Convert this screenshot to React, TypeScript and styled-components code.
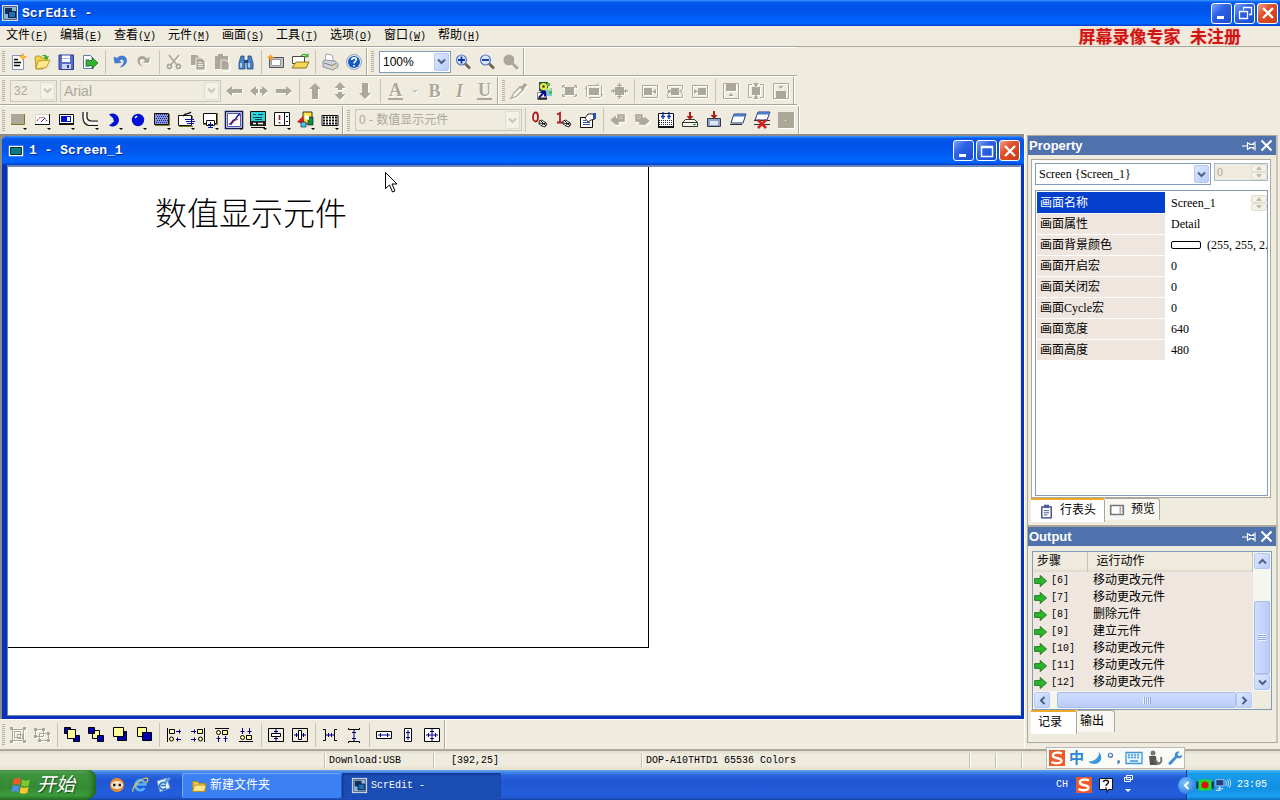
import React from 'react';
import styled, { createGlobalStyle, css } from 'styled-components';

const SANS = "'Liberation Sans', 'Noto Sans CJK SC', sans-serif";
const SERIF = "'Liberation Serif', 'Noto Sans CJK SC', serif";
const MONO = "'Liberation Mono', 'Noto Sans CJK SC', monospace";
const FACE = '#efebde';
const GRAY = '#aca899';
const TITLE_BLUE =
  'linear-gradient(180deg, #3c9bff 0%, #0a5cf0 8%, #0054e8 20%, #0054ea 45%, #0062fc 75%, #0066ff 90%, #0048d8 97%, #003cc0 100%)';

const GlobalStyle = createGlobalStyle`
  * { box-sizing: border-box; }
  html, body { margin: 0; height: 100%; }
  body { background: ${FACE}; font: 12px/16px ${MONO}; color: #000; overflow: hidden; }
  button, input, select { font: inherit; color: inherit; margin: 0; }
  button { padding: 0; border: 0; background: none; }
  svg { display: block; flex: none; }
`;

/* ---------- icons ---------- */

const o = { fill: 'none', stroke: '#000', strokeWidth: 1 };
const g = { fill: GRAY };
const go = { fill: 'none', stroke: GRAY, strokeWidth: 1 };

const arrowH = (x: number, y: number, c = '#000080') => (
  <path d={`M${x} ${y}h5M${x + 1.5} ${y - 2}v4`} stroke={c} fill="none" />
);
const arrowR = (x: number, y: number, c = '#000080') => (
  <path d={`M${x} ${y}h5M${x + 3.5} ${y - 2}v4`} stroke={c} fill="none" />
);
const arrowU = (x: number, y: number, c = '#000080') => (
  <path d={`M${x} ${y}v6M${x - 2} ${y + 2.5}h4`} stroke={c} fill="none" />
);
const arrowD = (x: number, y: number, c = '#000080') => (
  <path d={`M${x} ${y}v6M${x - 2} ${y + 3.5}h4`} stroke={c} fill="none" />
);

const icons: Record<string, React.ReactNode> = {
  newFile: (
    <>
      <path d="M2.500 1.500h11v14h-11z" fill="#fff" stroke="#7b96b8" />
      <path d="M4 5.500h4M4 8.500h7M4 11.500h6" stroke="#000" strokeWidth="1.400" />
      <path d="M13-1l1.300 2.700L17 3l-2.700 1.300L13 7l-1.300-2.700L9 3l2.700-1.300z" fill="#f7931e" />
      <circle cx="13" cy="3" r="1.800" fill="#ffc23a" />
    </>
  ),
  openFile: (
    <>
      <path d="M1 3l1-1h4l1.500 2H13v4L9 15H2z" fill="#f3cf4a" stroke="#b0891d" strokeWidth=".8" />
      <path d="M4 7l12-1-3.500 7.500L2 15z" fill="#ffe98a" stroke="#b0891d" strokeWidth=".8" />
      <path d="M7 3c2-3 5-3 6-.5l2-.5-2 4-3.500-2 1.500-.5C10.500 1.500 9 1.500 7 3z" fill="#3caa28" />
    </>
  ),
  save: (
    <>
      <path d="M1 1h14.500v14.500H1z" fill="#5a6cc8" stroke="#2c3b94" />
      <path d="M4 1.500h8V8H4z" fill="#fff" />
      <path d="M4 10h9v5H4z" fill="#c9d2f0" />
      <path d="M9 11h2v3H9z" fill="#2c3b94" />
      <path d="M4 4.500h8" stroke="#b5c0e8" />
    </>
  ),
  exportFile: (
    <>
      <path d="M1.500 1.500h7l3 3v10h-10z" fill="#fff" stroke="#5c7ea8" />
      <path d="M3 5.500h4M3 12.500h5" stroke="#8fa9c9" />
      <path d="M4 6.500h6V3.500l6 5.500-6 5.500v-3H4z" fill="#32b432" stroke="#14701a" strokeWidth=".8" />
    </>
  ),
  undo: <path d="M2 3l1 6 6-.5-2-2c2-2 5-1.500 5 1 0 2-1.500 4-3.500 5.500 4-1 6-3.500 6-6.500 0-5-6-6-9.500-2z" fill="#3f7fd8" stroke="#2758ac" strokeWidth=".6" />,
  redo: <path d="M14 3l-1 6-6-.5 2-2c-2-2-5-1.500-5 1 0 2 1.500 4 3.500 5.500-4-1-6-3.500-6-6.500 0-5 6-6 9.500-2z" {...g} />,
  cut: (
    <g fill="none" stroke={GRAY} strokeWidth="1.800">
      <path d="M3 1l8 10M13 1L5 11" />
      <circle cx="3.500" cy="12.500" r="2" />
      <circle cx="12.500" cy="12.500" r="2" />
    </g>
  ),
  copy: (
    <>
      <path d="M1 1h6l3 3v7H1z" {...g} />
      <path d="M6 4h6l3 3v9H6z" fill={GRAY} stroke={FACE} />
      <path d="M8 8.500h4M8 10.500h5M8 12.500h5" stroke={FACE} />
    </>
  ),
  paste: (
    <>
      <path d="M1 2h3V0h5v2h5v13H1z" {...g} />
      <path d="M7 6h5l3 3v7H7z" fill={GRAY} stroke={FACE} />
    </>
  ),
  find: (
    <>
      <path d="M3 2h3v3l1 2v8H1V9z" fill="#4a82c8" stroke="#1f4582" strokeWidth=".8" />
      <path d="M13 2h-3v3L9 7v8h6V9z" fill="#4a82c8" stroke="#1f4582" strokeWidth=".8" />
      <path d="M6 6h4v3H6z" fill="#1f4582" />
      <path d="M3 9v4.500M11 9v4.500" stroke="#c6ddf7" strokeWidth="1.600" />
    </>
  ),
  newScreen: (
    <>
      <path d="M1.500 3.500h14v10h-14z" fill="#c8c4b0" stroke="#4a5266" />
      <path d="M3.500 5.500h9v6h-9z" fill="#fff" stroke="#8c98b0" />
      <path d="M2.500 0l1.200 2.300L6 3.500 3.700 4.700 2.500 7 1.300 4.700-1 3.500l2.300-1.200z" fill="#f7931e" />
    </>
  ),
  openScreen: (
    <>
      <path d="M.5 2.500h12v7H.5z" fill="#fff" stroke="#4a4a3a" />
      <path d="M4 8h13l-3 6H0z" fill="#f4d756" stroke="#6d5a14" strokeWidth=".8" />
      <path d="M9 2c2-2 4-2 6-.5M16-.500v3h-3" stroke="#3caa28" fill="none" strokeWidth="1.300" />
    </>
  ),
  print: (
    <>
      <path d="M3 7L4 0l6 1 1.500 6z" fill="#fff" stroke="#8f96a5" strokeWidth=".8" />
      <path d="M1 7l3-1 9 1 3 3v3l-5 3-10-3z" fill="#cfd2d8" stroke="#7e838f" strokeWidth=".8" />
      <path d="M2 9l8 2.500 4-2" stroke="#7e838f" fill="none" />
      <path d="M10 12.500l4-2v1.500l-4 2z" fill="#e8d46a" />
    </>
  ),
  help: (
    <>
      <circle cx="8" cy="8" r="7.500" fill="#e4ecf4" stroke="#8ea4bc" />
      <circle cx="8" cy="8" r="6" fill="#1659c0" />
      <path d="M5.800 6c0-3 4.700-2.800 4.500-.3C10.200 7.300 8 7.400 8 9.500M8 11v1.600" stroke="#fff" strokeWidth="1.700" fill="none" />
    </>
  ),
  zoomIn: (
    <>
      <path d="M10 9.500l5 5" stroke="#75604c" strokeWidth="2.600" />
      <circle cx="6.500" cy="6" r="5" fill="#d6e8ff" stroke="#5a7ac8" strokeWidth="1.200" />
      <path d="M3 6h7M6.500 2.500v7" stroke="#10309c" strokeWidth="1.800" />
    </>
  ),
  zoomOut: (
    <>
      <path d="M10 9.500l5 5" stroke="#75604c" strokeWidth="2.600" />
      <circle cx="6.500" cy="6" r="5" fill="#d6e8ff" stroke="#5a7ac8" strokeWidth="1.200" />
      <path d="M3 6h7" stroke="#10309c" strokeWidth="1.800" />
    </>
  ),
  zoomOff: (
    <>
      <path d="M9 9l6 6" stroke={GRAY} strokeWidth="3" />
      <circle cx="6" cy="6" r="5.500" {...g} />
    </>
  ),
  left: <path d="M0 8l6-5v3h10v4H6v3z" {...g} />,
  right: <path d="M16 8l-6-5v3H0v4h10v3z" {...g} />,
  leftRight: <path d="M-1 8l6-5v3h2v4H5v3zM17 8l-6-5v3H9v4h2v3z" {...g} />,
  up: <path d="M8 0l6 6h-3v10H5V6H2z" {...g} />,
  down: <path d="M8 16l6-6h-3V0H5v10H2z" {...g} />,
  upDown: <path d="M8-1l5.500 6H10v2H6V5H2.500zM8 17l5.500-6H10V9H6v2H2.500z" {...g} />,
  caret: <path d="M5 7h6l-3 3z" fill="#c9c5b6" />,
  dropper: (
    <>
      <path d="M0 15.500l3-5.500 6-6 3 3-6 6z" fill="none" stroke={GRAY} strokeWidth="1.300" />
      <path d="M8 3l3 0 2.500-3 3 2-3 3-1 3z" {...g} />
    </>
  ),
  flower: (
    <>
      <path d="M3-1h9v9H3z" fill="#1a5a4a" />
      <path d="M9 5h7v8H9z" fill="#79c8e8" />
      <circle cx="7.500" cy="3.500" r="3.600" fill="#f4ea3c" />
      <circle cx="7.500" cy="3.500" r="1.300" fill="#333" />
      <path d="M11 0h3v3h-3zM13 8h3v3h-3z" fill="#58b84c" />
      <circle cx="13" cy="6" r="1.500" fill="#f4ea3c" />
      <path d="M1.500 9.500h9v7h-9z" fill="#fff" stroke="#8a8a8a" />
      <path d="M2 15.500h9" stroke="#222" strokeWidth="2" />
      <path d="M3 14.500l5-5M4.500 9H9v4.500" stroke="#0a0a8c" strokeWidth="2" fill="none" />
    </>
  ),
  fitBox: (
    <>
      <path d="M4 4h9v8H4z" {...g} />
      <path d="M1.500 5V2.500H4M13 2.500h2.500V5M15.500 11v2.500H13M4 13.500H1.500V11" {...go} />
      <path d="M2 3l3 3M15 3l-3 3M2 13l3-3M15 13l-3-3" {...go} />
    </>
  ),
  growBox: (
    <>
      <path d="M3 5h10v7H3z" {...g} />
      <path d="M2 2.500h11l-2-2M3 14.500h11M5 16.500l-2-2M.5 3v11M15.500 3v11M-1 6l1.500-2M17 11l-1.500 2" {...go} />
    </>
  ),
  centreBox: (
    <>
      <path d="M4 4h9v8H4z" {...g} />
      <path d="M0 8h17M8.500 0v16" stroke={GRAY} strokeWidth="1.600" />
      <path d="M6 2.500h5M6 13.500h5M2.500 6v4M14.500 6v4" {...go} />
    </>
  ),
  fitLeft: (<><path d="M.5 2.500h15v12H.5z" {...go} /><path d="M2 5h8v7H2zM10 8.500l4-2.500v5z" {...g} /></>),
  fitMid: (<><path d="M.5 2.500h15M.5 14.500h15M.5 2.500V6M15.500 2.500V6M.5 14.500V11M15.500 14.500V11" {...go} /><path d="M4 5h8v7H4zM0 8.500h4v1H0zM12 8.500h4v1h-4zM1 6l4 2.500L1 11zM15 6l-4 2.500 4 2.500z" {...g} /></>),
  fitRight: (<><path d="M.5 2.500h15v12H.5z" {...go} /><path d="M6 5h8v7H6zM6 8.500L2 6v5z" {...g} /></>),
  fitTop: (<><path d="M.5.5h15v15H.5z" {...go} /><path d="M3 0h10v8H3zM8 10l2.500 3h-5z" {...g} /></>),
  fitCentre: (<><path d="M4 1.500H.5v13H4M12 1.500h3.500v13H12" {...go} /><path d="M4 4h8v8H4zM8 5l2.500-5h-5zM8 11l2.500 5h-5z" {...g} /></>),
  fitBottom: (<><path d="M.5.5h15v15H.5z" {...go} /><path d="M3 8h10v8H3zM8 6l2.500-3h-5z" {...g} /></>),
  button: (
    <>
      <path d="M1 2h13v10H1z" {...g} />
      <path d="M14.500 2v10.500H1" stroke="#7d7a28" fill="none" />
    </>
  ),
  meter: (
    <>
      <path d="M1.500 2.500h14v10h-14z" fill="#fff" stroke="#d8d4c4" />
      <path d="M15.500 2v10.500H1" stroke="#111" fill="none" />
      <path d="M3 9c2-5 8-5 10 0" stroke="#b01a1a" fill="none" strokeDasharray="2 1" />
      <path d="M7 10l4-4" stroke="#1530c0" />
    </>
  ),
  lamp: (
    <>
      <path d="M1.500 2.500h14v10h-14z" fill="#fff" stroke="#111" />
      <path d="M3 4h10v6H3z" fill="#0014d0" />
      <path d="M9 5h3v4H9z" fill="#fff" />
      <path d="M1 12h15" stroke="#111" strokeWidth="2" />
    </>
  ),
  pipe: (
    <>
      <path d="M1 0v6c0 4 3 7.500 6 7.500h9M5 0v5c0 2 2 4 4 4h7" fill="none" stroke="#111" strokeWidth="1.200" />
      <path d="M3 0v5.500c0 3.500 2.500 5.700 5.500 5.700H16" fill="none" stroke="#fff" strokeWidth="1.500" />
    </>
  ),
  pie: <path d="M3 2.500A6.500 6.500 0 1 1 3 13.500L8 9.500 7 6z" fill="#0010d8" />,
  circle: (<><circle cx="8" cy="8" r="6.200" fill="#0010d8" /><path d="M5 6l2-2" stroke="#fff" strokeWidth="1.500" /></>),
  pattern: (
    <>
      <path d="M.5 1.500h14v11H.5z" fill="#8c96d0" stroke="#111" />
      {[3, 5, 7, 9, 11].map((y) => <path key={y} d={`M${y % 4 === 3 ? 2 : 3} ${y - 0.5}h11`} stroke="#1824a8" strokeDasharray="1 1" />)}
      <path d="M15.500 2v11.500H1" stroke="#7d7a28" fill="none" />
    </>
  ),
  input: (
    <>
      <path d="M0.500 3.500h13v10H.5z" fill="#fff" stroke="#111" />
      <path d="M5 4c3-4 5-1 8-4" stroke="#111" fill="none" strokeWidth="1.400" />
      <path d="M7 7.500h9M8 9.500h9M9 11.500h7" stroke="#0a18a8" />
      <path d="M14.500 4v3M1 14.500h14" stroke="#7d7a28" />
    </>
  ),
  display: (
    <>
      <path d="M1.500 1.500h13v10h-13z" fill="#fff" stroke="#111" />
      <path d="M15.500 1v11.500H1" stroke="#7d7a28" fill="none" />
      <path d="M4.500 8.500h8v5h-8z" fill="#fff" stroke="#111" />
      <path d="M8.500 10v6M6 12.500h5M6 15.500h5" stroke="#0a18a8" />
    </>
  ),
  trend: (
    <>
      <path d="M-.5-.5h17v17h-17z" fill="#fff" stroke="#101850" strokeWidth="1.500" />
      <path d="M1.500 1.500h13v13h-13z" stroke="#2430a8" fill="none" strokeWidth=".8" />
      <path d="M3 12c3 1 3-4 5-4s2-4 6-6" stroke="#0a18a8" fill="none" strokeWidth="1.400" />
      <path d="M5 13l3-4 4-2" stroke="#b01a1a" fill="none" />
    </>
  ),
  alarm: (
    <>
      <path d="M.5-.5h15v14H.5z" fill="#30d4d8" stroke="#111" />
      <path d="M3 2.500h3M8 2.500h5M3 5.500h9M5 7.500h7" stroke="#064850" />
      <path d="M1 9h15v5H1z" fill="#222" />
      <path d="M3 11.500h3M8 11.500h5" stroke="#fff" strokeWidth="1.500" />
      <path d="M1 15.500h14" stroke="#111" />
    </>
  ),
  notice: (
    <>
      <path d="M.5.5h15v13H.5z" fill="#fff" stroke="#111" />
      <path d="M10.500 1v12M12 4.500h2M12 9.500h2" stroke="#111" />
      <path d="M5.500 3v5M5.500 10v1.500" stroke="#a01818" strokeWidth="1.600" />
    </>
  ),
  palette: (
    <>
      <path d="M5 0h9v12H5z" fill="#ffe23c" stroke="#333" />
      <path d="M10 5h5v8h-5z" fill="#118c44" stroke="#222" strokeWidth=".7" />
      <path d="M-1 10l6-6 2 9z" fill="#d42020" />
      <path d="M3 10h5v5H3z" fill="#49c6e0" stroke="#135" strokeWidth=".7" />
      <path d="M7 3l4 1v4L7 7z" fill="#fff" />
    </>
  ),
  keyboard: (
    <>
      <path d="M0 3.500h16v10H0z" fill="#fff" stroke="#111" />
      {[5.5, 8.5, 11.5].map((y) => <path key={y} d={`M1 ${y}h14`} stroke="#111" strokeWidth="2" strokeDasharray="2 1" />)}
    </>
  ),
  state0: (
    <>
      <ellipse cx="3.500" cy="5" rx="2.500" ry="4.500" fill="none" stroke="#b01a1a" strokeWidth="1.800" />
      <path d="M7 9l3-1 5 4-2 3-3-1-3-2z" fill="#fff" stroke="#333" />
      <path d="M7 11l7 1M9 14l5-4M8 8l6 6" stroke="#222" />
    </>
  ),
  state1: (
    <>
      <path d="M1 2.500l3-1.500v9M1 10.500h6" fill="none" stroke="#b01a1a" strokeWidth="1.800" />
      <path d="M7 9l3-1 5 4-2 3-3-1-3-2z" fill="#fff" stroke="#333" />
      <path d="M7 11l7 1M9 14l5-4M8 8l6 6" stroke="#222" />
    </>
  ),
  properties: (
    <>
      <path d="M.5 5.500h12v10H.5z" fill="#fff" stroke="#111" />
      <path d="M3 8.500h3M3 10.500h7M3 12.500h7" stroke="#345ca8" />
      <path d="M5 6l3-4h4l3 1v4l-4 1-3 2z" fill="#fff" stroke="#222" />
      <path d="M13 1h3v6h-3z" fill="#2850b0" />
    </>
  ),
  prev: <path d="M0 8l6-5v3h1V2h8v8H9v3H6zM9 4.500h4M9 6.500h4" fill={GRAY} stroke={FACE} strokeWidth=".5" />,
  next: <path d="M16 9l-6-5v2H9V2H1v8h4v3h5v1zM3 4.500h4M3 6.500h4" fill={GRAY} stroke={FACE} strokeWidth=".5" />,
  compile: (
    <>
      <path d="M0.500 1.500h15v13H.5z" fill="#fff" stroke="#111" />
      <path d="M1 8.500h14M1 10.500h14M1 12.500h14" stroke="#222" strokeDasharray="1 1" />
      <path d="M0 15h16" stroke="#111" strokeWidth="2" />
      <path d="M5 0v7M11 0v7M3 4.500h4M9 4.500h4" stroke="#0a38a8" strokeWidth="1.400" />
    </>
  ),
  download: (
    <>
      <path d="M0.500 10.500l3-3h9l3 3v4H.5z" fill="#f4f4ea" stroke="#333" />
      <path d="M.5 10.500h15" stroke="#333" />
      <path d="M11 12.500h3" stroke="#2a9a2a" />
      <path d="M8 0v5" stroke="#b01a1a" strokeWidth="2" />
      <path d="M4.500 4h7L8 8z" fill="#b01a1a" />
    </>
  ),
  upload: (
    <>
      <path d="M1.500 6.500h13v8h-13z" fill="#8ea2c4" stroke="#333a4c" />
      <path d="M4 9h8v4H4z" fill="#dfe7f2" />
      <path d="M8-1v5" stroke="#b01a1a" strokeWidth="2" />
      <path d="M4.500 3h7L8 7z" fill="#b01a1a" />
    </>
  ),
  simulate: (
    <>
      <path d="M4 2h12l-3 9H1z" fill="#fff" stroke="#1f3a78" />
      <path d="M4 2h12l-1 2.500H3.500z" fill="#4a7ac8" />
      <path d="M0 12.500h12" stroke="#333" />
    </>
  ),
  simulateOff: (
    <>
      <path d="M4 0h12l-3 8H1z" fill="#fff" stroke="#1f3a78" />
      <path d="M4 0h12l-1 2.500H3.500z" fill="#4a7ac8" />
      <path d="M0 8.500h16M0 12.500h16" stroke="#333" />
      <path d="M4 8l8 8M12 8l-8 8" stroke="#d42020" strokeWidth="2.600" />
    </>
  ),
  block: (<><path d="M0 0h16v16H0z" {...g} /><path d="M7 8h1v1H7z" fill="#fff" /></>),
  group: (
    <>
      <path d="M2.500 2.500h11v11h-11z" {...go} />
      <path d="M4.500 4.500h6v6h-6zM7.500 7.500h5v4h-5z" {...go} />
      <path d="M0 0h3v3H0zM13 0h3v3h-3zM0 13h3v3H0zM13 13h3v3h-3z" {...g} />
    </>
  ),
  ungroup: (
    <>
      <path d="M1.500 2.500h8v7h-8zM5.500 6.500h9v7h-9z" {...go} />
      <path d="M0 1h3v3H0zM8 1h3v3H8zM0 8h3v3H0zM13 5h3v3h-3zM4 12h3v3H4zM13 12h3v3h-3z" {...g} />
    </>
  ),
  toFront: (
    <>
      <path d="M.5.5h6v6h-6zM9.500 8.500h6v6h-6z" fill="#0000b0" stroke="#000" />
      <path d="M3.500 2.500h8v9h-8z" fill="#ffff98" stroke="#000" />
    </>
  ),
  toBack: (
    <>
      <path d="M4.500 3.500h7v8h-7z" fill="#ffff98" stroke="#000" />
      <path d="M.5.5h6v6h-6zM9.500 8.500h6v6h-6z" fill="#0000b0" stroke="#000" />
    </>
  ),
  forward: (
    <>
      <path d="M5.500 4.500h9v9h-9z" fill="#0000b0" stroke="#000" />
      <path d="M1.500.5h10v9h-10z" fill="#ffff98" stroke="#000" />
    </>
  ),
  backward: (
    <>
      <path d="M1.500.5h9v9h-9z" fill="#ffff98" stroke="#000" />
      <path d="M6.500 5.500h9v8h-9z" fill="#0000b0" stroke="#000" />
    </>
  ),
  alignLeft: (<><path d="M1.500 1v14" {...o} /><path d="M3.500 2.500h5v4h-5z" fill="#ffff98" stroke="#000" /><circle cx="5.500" cy="12" r="2" fill="#ffff98" stroke="#000" />{arrowR(10, 4.5)}{arrowH(10, 12.5)}</>),
  alignRight: (<><path d="M14.500 1v14" {...o} /><path d="M7.500 2.500h5v4h-5z" fill="#ffff98" stroke="#000" /><circle cx="10.500" cy="12" r="2" fill="#ffff98" stroke="#000" />{arrowR(1, 4.5)}{arrowR(1, 12.5)}</>),
  alignTop: (<><path d="M1 1.500h14" {...o} /><path d="M8.500 3.500h5v4h-5z" fill="#ffff98" stroke="#000" /><circle cx="4.500" cy="5.500" r="2" fill="#ffff98" stroke="#000" />{arrowU(4.5, 9)}{arrowU(11.5, 9)}</>),
  alignBottom: (<><path d="M1 14.500h14" {...o} /><path d="M8.500 8.500h5v4h-5z" fill="#ffff98" stroke="#000" /><circle cx="4.500" cy="10.500" r="2" fill="#ffff98" stroke="#000" />{arrowD(4.5, 1)}{arrowD(11.5, 1)}</>),
  centreV: (<><path d="M.5 1.500h15v13H.5z" {...o} /><path d="M3.500 6.500h9v3h-9z" fill="#fff" stroke="#000" /><path d="M8 2v4M8 10v4M6 4.500h4M6 11.500h4" stroke="#000080" /></>),
  centreH: (<><path d="M.5 1.500h15v13H.5z" {...o} /><path d="M6.500 3.500h3v9h-3z" fill="#fff" stroke="#000" /><path d="M2 8h4M10 8h4M4.500 6v4M11.500 6v4" stroke="#000080" /></>),
  spaceH: (<><path d="M1 2.500h2.500v11H1M15 2.500h-2.500v11H15" {...o} /><path d="M4 8h8M6.500 6v4M9.500 6v4" stroke="#000080" /></>),
  spaceV: (<><path d="M2.500 1v1.500h11V1M2.500 16v-1.500h11V16" {...o} /><path d="M8 3v11M6 5.500h4M6 11.500h4" stroke="#000080" /></>),
  sameWidth: (<><path d="M.5 4.500h15v7H.5z" fill="#fff" stroke="#000" /><path d="M2 8h12M4.500 6v4M11.500 6v4" stroke="#000080" /></>),
  sameHeight: (<><path d="M4.500 1.500h7v13h-7z" fill="#fff" stroke="#000" /><path d="M8 3v10M6 5.500h4M6 10.500h4" stroke="#000080" /></>),
  sameSize: (<><path d="M.5 1.500h15v13H.5z" fill="#fff" stroke="#000" /><path d="M2 8h12M8 2v12M4.500 6v4M11.500 6v4M6 4.500h4M6 11.500h4" stroke="#000080" /></>),
  app: (
    <>
      <path d="M0 0h16v16H0z" fill="#dfe6ee" />
      <path d="M1.500 1.500h13v13h-13z" fill="#8eb4dc" stroke="#4d5f78" />
      <path d="M3 3h7v6H3z" fill="#10305c" />
      <path d="M6.500 6.500h7v6h-7z" fill="#1c6fb8" stroke="#061c3c" />
    </>
  ),
  doc: (<><path d="M1.500 3.500h13v9h-13z" fill="#0a7c80" stroke="#fff" strokeWidth="1.400" /><path d="M2.500 4.500h11v7h-11z" fill="none" stroke="#03383a" /></>),
  clipboard: (
    <>
      <path d="M2.500 2.500h11v13h-11z" fill="#fff" stroke="#2c3d78" strokeWidth="1.500" />
      <path d="M5 0h6v4H5z" fill="#4a5ea0" />
      <path d="M5 7h6M5 9.500h6M5 12h4" stroke="#2c3d78" />
    </>
  ),
  preview: (<><path d="M1 3h14v10H1z" fill="#fff" stroke="#777" strokeWidth="1.800" /><path d="M11.500 4v8M13 6h1M13 9h1" stroke="#777" /></>),
  folder: (<><path d="M1 3h5l2 2h7v9H1z" fill="#f0c842" stroke="#a57c10" strokeWidth=".8" /><path d="M3 7h13l-2 7H1z" fill="#ffe68c" stroke="#a57c10" strokeWidth=".8" /></>),
  player: (<><circle cx="8" cy="8" r="7" fill="#e88c38" /><ellipse cx="8" cy="8" rx="6" ry="4" fill="#f8e4c8" /><path d="M4 8h2.500M9.500 8H12" stroke="#222" strokeWidth="2.500" /></>),
  ie: (
    <>
      <path d="M12.500 11a5 5 0 1 1 .8-3.500H4" fill="none" stroke="#55b4f8" strokeWidth="2.600" />
      <path d="M1 15C-1 11 9 1 15 1c2 1 0 4-1 5" fill="none" stroke="#f4c83c" strokeWidth="1.200" />
    </>
  ),
  desktop: (
    <>
      <path d="M2 4l10-3 3 10-10 4z" fill="#e8f2fc" stroke="#6a93c0" />
      <path d="M11 7a3.500 3.500 0 1 0 0 4M6 8.500h5" fill="none" stroke="#1c70c8" strokeWidth="1.500" />
      <path d="M9 4l5-4 2 2-5 4z" fill="#5aa0dc" />
    </>
  ),
  sogou: (
    <>
      <path d="M0 0h16v16H0z" fill="#f05a28" />
      <path d="M13 3.500C8 1.500 3 3 4 6s8 1.500 8.500 4.500S6 14 2.500 12" stroke="#fff" strokeWidth="2.400" fill="none" />
    </>
  ),
  moon: <path d="M12 1c2 6-5 11-11 11 3 4 13 4 14-4 0-3-1-5-3-7z" fill="#3c96dc" />,
  punct: (<><circle cx="4" cy="5" r="2.300" fill="none" stroke="#3c78b4" strokeWidth="1.300" /><path d="M12 11h2v2l-2 2" stroke="#3c78b4" fill="#3c78b4" strokeWidth=".8" /></>),
  softKeys: (
    <>
      <path d="M0 2.500h16v11H0z" fill="#eaf4fc" stroke="#3c96dc" strokeWidth="1.300" />
      {[5, 7.5].map((y) => <path key={y} d={`M2 ${y}h12`} stroke="#3c96dc" strokeWidth="1.500" strokeDasharray="2 1" />)}
      <path d="M4 11h8" stroke="#3c96dc" strokeWidth="1.500" />
    </>
  ),
  skin: (<><circle cx="6" cy="3" r="2.500" fill="#777" /><path d="M2 6h7l1 9H3z" fill="#555" /><path d="M10 14c4 0 5-3 4-7M8 10l4 4" stroke="#777" strokeWidth="2" fill="none" /></>),
  wrench: <path d="M1 13l7-7c-1-4 2-6 5-5L10.500 4 13 6l3-2c0 4-3 5-6 4l-6 7c-2 1-4 0-3-2z" fill="#3c8cd2" />,
  helpNote: (
    <>
      <path d="M1.500 1.500h13v11h-4l-1.500 3v-3h-7.500z" fill="#fff" stroke="#111" />
      <path d="M5.500 5c0-2.500 5-2.500 5 0 0 2-2.500 2-2.500 4M8 10.500v1.200" stroke="#111" strokeWidth="1.500" fill="none" />
    </>
  ),
  restoreBar: (
    <>
      <path d="M6.500-1.500h6v4h-6zM4.500.5h6v4h-6z" fill="#2257d8" stroke="#fff" />
      <path d="M5 12h6l-3 3z" fill="#fff" />
    </>
  ),
  recorder: (
    <>
      <path d="M1 2h14v12H1z" fill="#1ee020" />
      <circle cx="8" cy="8" r="4" fill="#e01010" />
      <path d="M-.5 4v8M16.500 4v8" stroke="#102030" strokeWidth="2" />
    </>
  ),
  network: (
    <>
      <path d="M0 2h9v7H0z" fill="#20407c" stroke="#a8c4ec" />
      <path d="M2 12h6M4.500 9v5H0" stroke="#c8d8f0" fill="none" strokeWidth="1.400" />
      <path d="M11 3c1 2 1 4 0 6M13 2c1.500 3 1.500 5 0 8M15 1c2 3 2 7 0 10" stroke="#cfe4ff" fill="none" />
    </>
  ),
  flag: (
    <>
      <path d="M2 3c2-1 4-1 6 0L7 8c-2-1-4-1-6 0z" fill="#f05a28" />
      <path d="M9 3.500c2 1 4 1 6.500 0l-1 5c-2 1-4 1-6.500 0z" fill="#7cc832" />
      <path d="M.8 9c2-1 4-1 6 0l-1 5c-2-1-4-1-6 0z" fill="#4a90e8" />
      <path d="M7.800 9.500c2 1 4 1 6.500 0l-1 5c-2 1-4 1-6.500 0z" fill="#f8c828" />
    </>
  ),
  stepArrow: <path d="M0 5h7V1l8 7-8 7v-4H0z" fill="#2cb42c" stroke="#0c6a14" />,
};

type IconProps = { name: string; size?: number; menu?: boolean };
const Icon = ({ name, size = 20, menu }: IconProps) => (
  <svg width={size} height={size} viewBox="-2 -2 20 20" aria-hidden="true">
    {icons[name]}
    {menu && <path d="M13 16h4l-2 2z" fill="#000" />}
  </svg>
);

/* ---------- shared controls ---------- */

const ToolButton = styled.button<{ $wide?: boolean }>`
  width: ${(p) => (p.$wide ? 25 : 24)}px;
  height: 24px;
  flex: none;
  display: flex;
  align-items: center;
  justify-content: center;
  color: ${GRAY};
  &:disabled svg { filter: drop-shadow(1px 1px 0 #fff); }
`;

const LetterButton = styled(ToolButton)<{ $italic?: boolean; $bar?: boolean }>`
  font: bold 18px/18px ${SERIF};
  font-style: ${(p) => (p.$italic ? 'italic' : 'normal')};
  text-shadow: 1px 1px 0 #fff;
  span { border-bottom: ${(p) => (p.$bar ? `2px solid ${GRAY}` : '0')}; padding: 0 1px; line-height: 16px; }
`;

const NarrowButton = styled(ToolButton)`
  width: 14px;
  overflow: hidden;
`;

const Separator = styled.span`
  width: 1px;
  height: 24px;
  margin: 0 2px 0 3px;
  flex: none;
  background: #c9c5b4;
`;

const Grip = styled.span`
  width: 3px;
  height: 21px;
  margin: 0 1px 0 2px;
  flex: none;
  background: repeating-linear-gradient(180deg, #b4b0a0 0 1px, ${FACE} 1px 2px);
`;

const Band = styled.div`
  display: flex;
  align-items: center;
  border-right: 1px solid ${GRAY};
  box-shadow: 1px 0 0 #fff;
  & + & { margin-left: 2px; }
`;

const ToolRow = styled.div<{ $last?: boolean }>`
  display: flex;
  height: 29px;
  width: max-content;
  min-width: 797px;
  border-bottom: ${(p) => (p.$last ? '0' : `1px solid ${GRAY}`)};
  border-top: 1px solid #fff;
`;

const ComboFrame = styled.span<{ $w: number; $off?: boolean; $gap?: number }>`
  display: grid;
  width: ${(p) => p.$w}px;
  height: 22px;
  margin-left: ${(p) => p.$gap ?? 0}px;
  flex: none;
  border: 1px solid ${(p) => (p.$off ? '#c9c7ba' : '#7f9db9')};
  background: ${(p) => (p.$off ? FACE : '#fff')};
  color: ${(p) => (p.$off ? GRAY : '#000')};
  > * { grid-area: 1 / 1; }
`;

const ComboSelect = styled.select<{ $font: string; $size: number }>`
  appearance: none;
  border: 0;
  outline: 0;
  width: 100%;
  min-width: 0;
  background: transparent;
  padding: 0 18px 0 3px;
  font: ${(p) => p.$size}px/18px ${(p) => p.$font};
  color: inherit;
  opacity: 1;
`;

const ComboArrow = styled.span<{ $off?: boolean }>`
  justify-self: end;
  width: 15px;
  height: 18px;
  margin: 1px;
  display: flex;
  align-items: center;
  justify-content: center;
  pointer-events: none;
  border-radius: 2px;
  color: ${(p) => (p.$off ? '#c9c7ba' : '#4d6185')};
  ${(p) =>
    p.$off
      ? css`background: #f4f2e8; border: 1px solid #e0ddd0;`
      : css`background: linear-gradient(135deg, #dde6fe, #b9cdf8); border: 1px solid #b4c8f4;`}
`;

const Chevron = ({ dir = 'down' }: { dir?: 'down' | 'up' | 'left' | 'right' }) => {
  const turn = { down: 0, left: 90, up: 180, right: 270 }[dir];
  return (
    <svg width="9" height="9" viewBox="0 0 9 9" aria-hidden="true">
      <path d="M1 2.500l3.500 3.500L8 2.500" fill="none" stroke="currentColor" strokeWidth="2" transform={`rotate(${turn} 4.500 4.500)`} />
    </svg>
  );
};

type ComboProps = { label: string; value: string; width: number; off?: boolean; gap?: number; font?: string; size?: number };
const Combo = ({ label, value, width, off, gap, font = SANS, size = 12 }: ComboProps) => (
  <ComboFrame $w={width} $off={off} $gap={gap}>
    <ComboSelect aria-label={label} disabled={off} $font={font} $size={size}>
      <option>{value}</option>
    </ComboSelect>
    <ComboArrow $off={off}><Chevron /></ComboArrow>
  </ComboFrame>
);

type Tool = string | null;
const Tools = ({ items, wide, disabled = [], menu }: { items: Tool[]; wide?: boolean; disabled?: string[]; menu?: boolean }) => (
  <>
    {items.map((name, i) =>
      name === null ? (
        <Separator key={i} />
      ) : (
        <ToolButton key={i} type="button" aria-label={name} $wide={wide} disabled={disabled.includes(name)}>
          <Icon name={name} menu={menu} />
        </ToolButton>
      ),
    )}
  </>
);

/* ---------- window chrome ---------- */

const Screen = styled.div`
  display: flex;
  flex-direction: column;
  min-height: 100vh;
  position: relative;
`;

const TitleBar = styled.header<{ $inner?: boolean }>`
  display: flex;
  align-items: center;
  gap: ${(p) => (p.$inner ? 3 : 2)}px;
  height: ${(p) => (p.$inner ? 29 : 26)}px;
  padding: ${(p) => (p.$inner ? '0 4px 0 4px' : '0 2px 0 0')};
  background: ${TITLE_BLUE};
  border-radius: ${(p) => (p.$inner ? '6px 6px 0 0' : '0')};
  flex: none;
`;

const TitleText = styled.h1`
  flex: 1;
  margin: 0;
  padding-top: 1px;
  font: bold 13px/16px ${MONO};
  color: #fff;
  text-shadow: 1px 1px 0 #0a2a80;
`;

const WindowButtons = styled.div`
  display: flex;
  gap: 2px;
`;

const WindowButton = styled.button<{ $close?: boolean }>`
  width: 21px;
  height: 21px;
  display: flex;
  align-items: center;
  justify-content: center;
  border: 1px solid #fff;
  border-radius: 3px;
  background: ${(p) =>
    p.$close
      ? 'linear-gradient(135deg, #f0a088, #e05028 40%, #c83c14)'
      : 'linear-gradient(135deg, #7ca4f4, #2c62e4 40%, #1c4cd0)'};
`;

const glyphs = {
  minimize: <path d="M3 11h7v3H3z" fill="#fff" />,
  restore: <path d="M6.500 5V2.500h8v7H12M2.500 6.500h8v7h-8zM6 2.500h9M2 6.500h9" fill="none" stroke="#fff" strokeWidth="1.300" />,
  maximize: <path d="M2.500 3.500h11v10h-11zM2 4.500h12" fill="none" stroke="#fff" strokeWidth="1.500" />,
  close: <path d="M3 3l10 10M13 3L3 13" stroke="#fff" strokeWidth="2.300" />,
};
type GlyphName = keyof typeof glyphs;
const ChromeButtons = ({ kinds }: { kinds: GlyphName[] }) => (
  <WindowButtons>
    {kinds.map((k) => (
      <WindowButton key={k} type="button" aria-label={k} $close={k === 'close'}>
        <svg width="16" height="16" viewBox="0 0 16 16">{glyphs[k]}</svg>
      </WindowButton>
    ))}
  </WindowButtons>
);

const MenuBar = styled.nav`
  display: flex;
  height: 21px;
  flex: none;
  border-bottom: 1px solid ${GRAY};
`;

const MenuItem = styled.button`
  width: 54px;
  padding-left: 6px;
  text-align: left;
  font: 12px/20px ${MONO};
  white-space: nowrap;
`;

const Small = styled.span`
  font-size: 10px;
`;

const Watermark = styled.strong`
  position: absolute;
  top: 27px;
  right: 39px;
  font: bold 17px/22px ${SANS};
  color: #d01414;
  text-shadow: 0 0 2px #ffb0a0;
  white-space: pre;
`;

const Workspace = styled.div`
  display: flex;
  flex: 1;
  min-height: 0;
  border-bottom: 2px solid ${GRAY};
`;

const Main = styled.main`
  display: flex;
  flex-direction: column;
  flex: 1;
  min-width: 0;
`;

const MdiArea = styled.section`
  flex: 1;
  display: flex;
  padding: 2px 0 0 2px;
  background: #8c8c88;
`;

const MdiWindow = styled.article`
  flex: 1;
  display: flex;
  flex-direction: column;
  background: #0a32b8;
  padding-bottom: 3px;
  border-radius: 6px 6px 0 0;
  min-width: 0;
`;

const MdiClient = styled.div`
  flex: 1;
  margin: 0 3px 0 5px;
  border: 1px solid #6c88b8;
  border-top-width: 2px;
  border-right-color: #d8ecfc;
  background: #fff;
  position: relative;
`;

const Artboard = styled.div`
  width: 641px;
  height: 481px;
  border-right: 1px solid #000;
  border-bottom: 1px solid #000;
  padding: 20px 0 0 147px;
  font: 300 32px/48px 'Noto Sans CJK SC', sans-serif;
`;

const Pointer = styled.svg`
  position: absolute;
  left: 377px;
  top: 5px;
`;

const BottomTools = styled.div`
  display: flex;
  height: 30px;
  border-top: 1px solid #fff;
`;

/* ---------- docked panels ---------- */

const Dock = styled.aside`
  width: 256px;
  flex: none;
  display: flex;
  flex-direction: column;
  padding: 1px 2px 6px 2px;
  border-left: 1px solid #fff;
`;

const Panel = styled.section<{ $h?: number }>`
  display: flex;
  flex-direction: column;
  flex: ${(p) => (p.$h ? `0 0 ${p.$h}px` : '1')};
  border: 1px solid ${GRAY};
  border-right: 2px solid #c8c4b4;
  padding-bottom: ${(p) => (p.$h ? 8 : 3)}px;
`;

const PanelHead = styled.header`
  display: flex;
  align-items: center;
  gap: 3px;
  height: 19px;
  padding: 0 3px 0 1px;
  background: #5072ac;
  color: #fff;
`;

const PanelTitle = styled.h2`
  flex: 1;
  margin: 0;
  font: bold 13px/18px ${SANS};
`;

const PanelBox = styled.div`
  flex: 1;
  display: flex;
  flex-direction: column;
  margin: 4px 5px 0 3px;
  padding: 3px 2px 1px 3px;
  border: 1px solid ${GRAY};
  background: #fff;
  min-height: 0;
`;

const PropertyTop = styled.div`
  display: flex;
  align-items: flex-start;
  gap: 3px;
  margin-bottom: 5px;
`;

const SpinFrame = styled.span`
  display: flex;
  flex: 1;
  min-width: 0;
  height: 18px;
  border: 1px solid #a8b8c4;
  background: ${FACE};
`;

const SpinInput = styled.input`
  flex: 1;
  width: 0;
  min-width: 0;
  border: 0;
  padding: 0 2px;
  background: transparent;
  color: ${GRAY};
  font: 12px/16px ${SERIF};
`;

const SpinButtons = styled.span`
  display: flex;
  flex-direction: column;
  width: 16px;
  flex: none;
`;

const SpinButton = styled.button`
  flex: 1;
  display: flex;
  align-items: center;
  justify-content: center;
  border: 1px solid #e0ddd0;
  border-radius: 2px;
  background: #f4f2e8;
  color: #c0bdae;
  min-height: 8px;
`;

const Spinners = () => (
  <SpinButtons>
    <SpinButton type="button" disabled aria-label="Up"><svg width="6" height="4" viewBox="0 0 6 4"><path d="M0 4l3-4 3 4z" fill="currentColor" /></svg></SpinButton>
    <SpinButton type="button" disabled aria-label="Down"><svg width="6" height="4" viewBox="0 0 6 4"><path d="M0 0l3 4 3-4z" fill="currentColor" /></svg></SpinButton>
  </SpinButtons>
);

const PropertyList = styled.div`
  flex: 1;
  border: 1px solid #7f9db9;
  padding: 1px 0 0 1px;
  overflow: hidden;
`;

const PropertyTable = styled.table`
  border-collapse: collapse;
  table-layout: fixed;
  width: 100%;
  font: 12px/16px ${SERIF};
`;

const PropertyName = styled.th<{ $active?: boolean }>`
  width: 128px;
  height: 21px;
  padding: 1px 0 0 3px;
  text-align: left;
  font-weight: normal;
  border-bottom: 1px solid #fff;
  background: ${(p) => (p.$active ? '#0440cc' : '#efe7df')};
  color: ${(p) => (p.$active ? '#fff' : '#000')};
`;

const PropertyValue = styled.td`
  padding: 0 0 0 6px;
  white-space: nowrap;
  overflow: hidden;
`;

const ValueLine = styled.span`
  display: flex;
  align-items: center;
  gap: 6px;
  > :first-child { flex: none; }
  > ${SpinButtons} { margin-left: auto; }
`;

const Swatch = styled.span`
  width: 30px;
  height: 8px;
  border: 1px solid #000;
  border-radius: 2px;
  background: #fff;
`;

const Tabs = styled.div`
  display: flex;
  align-items: flex-start;
  margin-left: 3px;
`;

const Tab = styled.button<{ $active?: boolean; $w: number }>`
  display: flex;
  align-items: center;
  gap: 5px;
  width: ${(p) => p.$w}px;
  height: ${(p) => (p.$active ? 24 : 22)}px;
  padding: 0 3px 0 ${(p) => (p.$active ? 7 : 3)}px;
  border: solid ${GRAY};
  border-width: 0 1px 0 0;
  border-top: ${(p) => (p.$active ? '2px solid #f0a828' : `1px solid ${GRAY}`)};
  border-radius: 0 3px 0 0;
  background: ${(p) => (p.$active ? '#fff' : '#f8f6f0')};
  font: 12px/16px ${MONO};
  white-space: nowrap;
`;

const OutputBox = styled.div`
  flex: 1;
  display: grid;
  grid-template-columns: 1fr 18px;
  grid-template-rows: 1fr 18px;
  margin: 5px 4px 0 4px;
  border: 1px solid #7f9db9;
  min-height: 0;
`;

const OutputTable = styled.table`
  border-collapse: collapse;
  table-layout: fixed;
  width: 100%;
  background: #efe7df;
`;

const OutputHead = styled.th`
  height: 20px;
  padding: 0 0 0 4px;
  text-align: left;
  font-weight: normal;
  background: linear-gradient(180deg, ${FACE} 80%, #dedaca);
  &:first-child { width: 54px; border-right: 1px solid #c8c4b4; }
  & + & { padding-left: 9px; border-right: 1px solid #c8c4b4; }
`;

const OutputCell = styled.td`
  height: 17px;
  padding: 0 0 0 6px;
  line-height: 16px;
  white-space: nowrap;
  &:first-child { padding-left: 0; }
`;

const StepLine = styled.span`
  display: flex;
  align-items: center;
  gap: 2px;
  font-size: 10px;
`;

const ScrollTrack = styled.div<{ $across?: boolean }>`
  display: flex;
  flex-direction: ${(p) => (p.$across ? 'row' : 'column')};
  background: #f6f5f0;
  padding: 1px;
`;

const ScrollButton = styled.button`
  width: 16px;
  height: 16px;
  flex: none;
  display: flex;
  align-items: center;
  justify-content: center;
  border: 1px solid #b4c8f4;
  border-radius: 2px;
  background: linear-gradient(135deg, #dde6fe, #bccffa);
  color: #4d6185;
`;

const ScrollGap = styled.span<{ $size: number }>`
  flex: 0 0 ${(p) => p.$size}px;
`;

const ScrollThumb = styled.span<{ $across?: boolean }>`
  flex: 1;
  display: flex;
  align-items: center;
  justify-content: center;
  border: 1px solid #a8bce8;
  border-radius: 2px;
  background: linear-gradient(${(p) => (p.$across ? 180 : 90)}deg, #cfdcfe, #b9ccf8);
  &::after {
    content: '';
    width: 8px;
    height: 7px;
    background: repeating-linear-gradient(${(p) => (p.$across ? 90 : 180)}deg, #eef3ff 0 1px, #8fa8dc 1px 2px);
  }
`;

const PanelButtons = () => (
  <>
    <button type="button" aria-label="Pin">
      <svg width="16" height="14" viewBox="0 0 16 14"><path d="M1 7h5M6.500 3v8M8 5.500h5M8 8.500h5M14 2.500v9M7 4l3 1.500M7 10l3-1.500M13 4l-2 1.500M13 10l-2-1.500" fill="none" stroke="#fff" strokeWidth="1.200" /></svg>
    </button>
    <button type="button" aria-label="Close">
      <svg width="13" height="13" viewBox="0 0 13 13"><path d="M1.500 1.500l10 10M11.500 1.500l-10 10" stroke="#fff" strokeWidth="2" /></svg>
    </button>
  </>
);

/* ---------- status bar and taskbar ---------- */

const StatusBar = styled.footer`
  display: grid;
  grid-template-columns: 324px 109px 208px 1fr 26px 26px 259px;
  height: 19px;
  flex: none;
  background: linear-gradient(180deg, #e0dccc, ${FACE} 20%, ${FACE} 75%, #e4e0c8);
  font: 10px/18px ${MONO};
`;

const StatusCell = styled.span<{ $pad?: number }>`
  margin: 2px 0;
  line-height: 16px;
  padding-left: ${(p) => p.$pad ?? 4}px;
  white-space: nowrap;
  & + & { border-left: 1px solid #c4c0b0; box-shadow: inset 1px 0 0 #fff; }
`;

const TaskBar = styled.footer`
  display: flex;
  height: 30px;
  flex: none;
  color: #fff;
  background: linear-gradient(180deg, #6ea4f0 0%, #3f86ea 8%, #2b66dc 18%, #2156d4 35%, #245edc 80%, #2158d0 92%, #1a44a8 100%);
`;

const StartButton = styled.button`
  display: flex;
  align-items: center;
  gap: 4px;
  width: 96px;
  padding-left: 9px;
  border-radius: 0 8px 10px 0;
  background: linear-gradient(180deg, #6cb46c 0%, #3c943c 15%, #348a34 60%, #3c9c3c 85%, #2c702c 100%);
  box-shadow: inset -3px 0 4px #1f661f;
  font: italic 19px/26px ${SANS};
  color: #fff;
  text-shadow: 1px 1px 1px #1c4a1c;
`;

const QuickLaunch = styled.div`
  display: flex;
  align-items: center;
  gap: 3px;
  width: 86px;
  padding-left: 11px;
`;

const PlainButton = styled.button`
  flex: none;
  color: inherit;
`;

const TaskButton = styled.button<{ $active?: boolean }>`
  display: flex;
  align-items: center;
  gap: 2px;
  width: 159px;
  margin: 3px 1px 2px 0;
  padding-left: 8px;
  border-radius: 2px;
  background: ${(p) => (p.$active ? '#1b4cb4' : '#3c81f3')};
  box-shadow: ${(p) => (p.$active ? 'inset 1px 1px 2px #10307c' : 'inset 1px 1px 1px #74a8fa')};
  color: #fff;
`;

const TrayLead = styled.div`
  display: flex;
  align-items: center;
  gap: 2px;
  margin-left: auto;
  padding-right: 48px;
  font: 10px/16px ${MONO};
`;

const Language = styled.span`
  margin-right: 4px;
`;

const Tray = styled.div`
  display: flex;
  align-items: center;
  width: 94px;
  border-left: 1px solid #0a3c98;
  background: linear-gradient(180deg, #50b8f8 0%, #189ce8 12%, #1290e4 60%, #18a0f0 88%, #0e70c0 100%);
  font: 10px/16px ${MONO};
  padding-right: 13px;
`;

const TrayToggle = styled.button`
  width: 17px;
  height: 17px;
  margin: 0 1px 0 -9px;
  border-radius: 9px;
  display: flex;
  align-items: center;
  justify-content: center;
  flex: none;
  background: radial-gradient(circle at 40% 35%, #7cc4fc, #1c6cd8);
  color: #fff;
`;

const Clock = styled.time`
  margin-left: auto;
`;

const InputBar = styled.div`
  position: absolute;
  right: 95px;
  bottom: 31px;
  display: flex;
  align-items: center;
  gap: 1px;
  height: 22px;
  width: 139px;
  border: 1px solid #b8b8b8;
  background: #fbfbf8;
  color: #2c86d0;
  font: bold 15px/20px ${SANS};
`;

const InputMode = styled.span`
  width: 17px;
  text-align: center;
`;

/* ---------- data ---------- */

const menus: [string, string][] = [
  ['文件', 'F'], ['编辑', 'E'], ['查看', 'V'], ['元件', 'M'], ['画面', 'S'],
  ['工具', 'T'], ['选项', 'O'], ['窗口', 'W'], ['帮助', 'H'],
];

const properties: [string, React.ReactNode][] = [
  ['画面名称', <ValueLine key="n"><span>Screen_1</span><Spinners /></ValueLine>],
  ['画面属性', 'Detail'],
  ['画面背景颜色', <ValueLine key="c"><Swatch /><span>(255, 255, 2.</span></ValueLine>],
  ['画面开启宏', '0'],
  ['画面关闭宏', '0'],
  ['画面Cycle宏', '0'],
  ['画面宽度', '640'],
  ['画面高度', '480'],
];

const steps: [number, string][] = [
  [6, '移动更改元件'], [7, '移动更改元件'], [8, '删除元件'], [9, '建立元件'],
  [10, '移动更改元件'], [11, '移动更改元件'], [12, '移动更改元件'],
];

const elementTools = ['button', 'meter', 'lamp', 'pipe', 'pie', 'circle', 'pattern', 'input', 'display', 'trend', 'alarm', 'notice', 'palette', 'keyboard'];
const arrangeTools = ['group', 'ungroup', null, 'toFront', 'toBack', 'forward', 'backward', null, 'alignLeft', 'alignRight', 'alignTop', 'alignBottom', null, 'centreV', 'centreH', null, 'spaceH', 'spaceV', null, 'sameWidth', 'sameHeight', 'sameSize'];
const offTools = ['redo', 'cut', 'copy', 'paste', 'zoomOff', 'left', 'right', 'leftRight', 'up', 'down', 'upDown', 'dropper', 'fitBox', 'growBox', 'centreBox', 'fitLeft', 'fitMid', 'fitRight', 'fitTop', 'fitCentre', 'fitBottom', 'prev', 'next', 'block', 'group', 'ungroup'];

export default function App() {
  return (
    <Screen>
      <GlobalStyle />
      <TitleBar>
        <Icon name="app" />
        <TitleText>ScrEdit -</TitleText>
        <ChromeButtons kinds={['minimize', 'restore', 'close']} />
      </TitleBar>

      <MenuBar>
        {menus.map(([label, key]) => (
          <MenuItem key={key} type="button">{label}<Small>(<u>{key}</u>)</Small></MenuItem>
        ))}
      </MenuBar>
      <Watermark>屏幕录像专家  未注册</Watermark>

      <ToolRow>
        <Band>
          <Grip />
          <Tools disabled={offTools} items={['newFile', 'openFile', 'save', 'exportFile', null, 'undo', 'redo', null, 'cut', 'copy', 'paste', 'find', null, 'newScreen', 'openScreen', null, 'print', 'help']} />
        </Band>
        <Band>
          <Grip />
          <Combo label="Zoom" value="100%" width={72} gap={4} />
          <Tools disabled={offTools} items={['zoomIn', 'zoomOut', 'zoomOff']} />
        </Band>
      </ToolRow>

      <ToolRow>
        <Band>
          <Grip />
          <Combo label="Font size" value="32" width={47} gap={4} off />
          <Combo label="Font" value="Arial" width={161} gap={3} size={14} off />
          <Tools wide disabled={offTools} items={['left', 'leftRight', 'right', null, 'up', 'upDown', 'down', null]} />
          <LetterButton type="button" disabled $wide $bar><span>A</span></LetterButton>
          <NarrowButton type="button" disabled aria-label="Text colour"><Icon name="caret" /></NarrowButton>
          <LetterButton type="button" disabled $wide>B</LetterButton>
          <LetterButton type="button" disabled $wide $italic>I</LetterButton>
          <LetterButton type="button" disabled $wide $bar><span>U</span></LetterButton>
        </Band>
        <Band>
          <Grip />
          <Tools wide disabled={offTools} items={['dropper', 'flower', 'fitBox', 'growBox', 'centreBox', null, 'fitLeft', 'fitMid', 'fitRight', null, 'fitTop', 'fitCentre', 'fitBottom']} />
        </Band>
      </ToolRow>

      <ToolRow $last>
        <Band>
          <Grip />
          <Tools menu items={elementTools} />
        </Band>
        <Band>
          <Grip />
          <Combo label="State" value="0 - 数值显示元件" width={167} gap={4} off />
          <Tools disabled={offTools} items={[null, 'state0', 'state1', 'properties', null, 'prev', 'next', 'compile', 'download', 'upload', 'simulate', 'simulateOff', 'block']} />
        </Band>
      </ToolRow>

      <Workspace>
        <Main>
          <MdiArea>
            <MdiWindow>
              <TitleBar $inner>
                <Icon name="doc" />
                <TitleText as="h2">1 - Screen_1</TitleText>
                <ChromeButtons kinds={['minimize', 'maximize', 'close']} />
              </TitleBar>
              <MdiClient>
                <Artboard>数值显示元件</Artboard>
                <Pointer width="13" height="22" viewBox="0 0 13 22" aria-hidden="true">
                  <path d="M.5.5v16l4-3.500 3 7 2.500-1-3-7h5z" fill="#fff" stroke="#000" />
                </Pointer>
              </MdiClient>
            </MdiWindow>
          </MdiArea>
          <BottomTools>
            <Band>
              <Grip />
              <Tools disabled={offTools} items={arrangeTools} />
            </Band>
          </BottomTools>
        </Main>

        <Dock>
          <Panel>
            <PanelHead><PanelTitle>Property</PanelTitle><PanelButtons /></PanelHead>
            <PanelBox>
              <PropertyTop>
                <Combo label="Object" value="Screen {Screen_1}" width={176} font={SERIF} />
                <SpinFrame><SpinInput aria-label="Index" disabled defaultValue="0" /><Spinners /></SpinFrame>
              </PropertyTop>
              <PropertyList>
                <PropertyTable>
                  <tbody>
                    {properties.map(([name, value], i) => (
                      <tr key={name}>
                        <PropertyName scope="row" $active={i === 0}>{name}</PropertyName>
                        <PropertyValue>{value}</PropertyValue>
                      </tr>
                    ))}
                  </tbody>
                </PropertyTable>
              </PropertyList>
            </PanelBox>
            <Tabs role="tablist">
              <Tab type="button" role="tab" aria-selected $active $w={74}><Icon name="clipboard" size={17} />行表头</Tab>
              <Tab type="button" role="tab" $w={55}><Icon name="preview" size={18} />预览</Tab>
            </Tabs>
          </Panel>

          <Panel $h={217}>
            <PanelHead><PanelTitle>Output</PanelTitle><PanelButtons /></PanelHead>
            <OutputBox>
              <OutputTable>
                <thead>
                  <tr><OutputHead scope="col">步骤</OutputHead><OutputHead scope="col">运行动作</OutputHead></tr>
                </thead>
                <tbody>
                  {steps.map(([n, action]) => (
                    <tr key={n}>
                      <OutputCell><StepLine><Icon name="stepArrow" size={16} />[{n}]</StepLine></OutputCell>
                      <OutputCell>{action}</OutputCell>
                    </tr>
                  ))}
                </tbody>
              </OutputTable>
              <ScrollTrack>
                <ScrollButton type="button" aria-label="Scroll up"><Chevron dir="up" /></ScrollButton>
                <ScrollGap $size={32} />
                <ScrollThumb />
                <ScrollButton type="button" aria-label="Scroll down"><Chevron /></ScrollButton>
              </ScrollTrack>
              <ScrollTrack $across>
                <ScrollButton type="button" aria-label="Scroll left"><Chevron dir="left" /></ScrollButton>
                <ScrollGap $size={7} />
                <ScrollThumb $across />
                <ScrollButton type="button" aria-label="Scroll right"><Chevron dir="right" /></ScrollButton>
              </ScrollTrack>
            </OutputBox>
            <Tabs role="tablist">
              <Tab type="button" role="tab" aria-selected $active $w={46}>记录</Tab>
              <Tab type="button" role="tab" $w={38}>输出</Tab>
            </Tabs>
          </Panel>
        </Dock>
      </Workspace>

      <StatusBar>
        <StatusCell />
        <StatusCell>Download:USB</StatusCell>
        <StatusCell $pad={17}>[392,25]</StatusCell>
        <StatusCell>DOP-A10THTD1 65536 Colors</StatusCell>
        <StatusCell />
        <StatusCell />
        <StatusCell />
      </StatusBar>

      <TaskBar>
        <StartButton type="button"><Icon name="flag" size={24} />开始</StartButton>
        <QuickLaunch>
          <PlainButton type="button" aria-label="Player"><Icon name="player" /></PlainButton>
          <PlainButton type="button" aria-label="Internet Explorer"><Icon name="ie" /></PlainButton>
          <PlainButton type="button" aria-label="Desktop"><Icon name="desktop" /></PlainButton>
        </QuickLaunch>
        <TaskButton type="button"><Icon name="folder" size={18} />新建文件夹</TaskButton>
        <TaskButton type="button" $active><Icon name="app" size={19} /><Small>ScrEdit -</Small></TaskButton>
        <TrayLead>
          <Language>CH</Language>
          <Icon name="sogou" />
          <Icon name="helpNote" />
          <Icon name="restoreBar" />
        </TrayLead>
        <Tray>
          <TrayToggle type="button" aria-label="Show hidden icons"><Chevron dir="left" /></TrayToggle>
          <Icon name="recorder" size={18} />
          <Icon name="network" size={18} />
          <Clock>23:05</Clock>
        </Tray>
      </TaskBar>

      <InputBar>
        <Icon name="sogou" />
        <InputMode>中</InputMode>
        <Icon name="moon" size={18} />
        <Icon name="punct" size={18} />
        <Icon name="softKeys" />
        <Icon name="skin" />
        <Icon name="wrench" size={18} />
      </InputBar>
    </Screen>
  );
}
